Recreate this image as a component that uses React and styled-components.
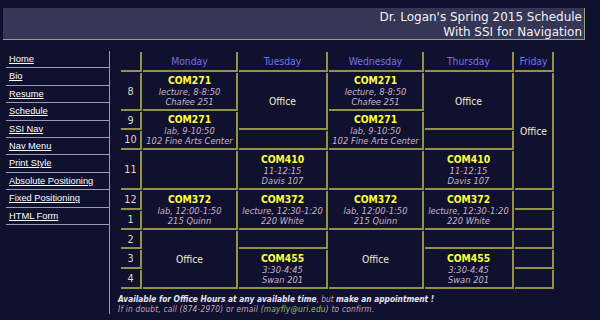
import React from "react";
import styled, { createGlobalStyle } from "styled-components";

const Global = createGlobalStyle`
  html, body { margin: 0; padding: 0; background: #10102f; }
  body { font-family: "DejaVu Sans Condensed", "DejaVu Sans", sans-serif; }
`;

const Page = styled.div`
  width: 600px;
  height: 320px;
  box-sizing: border-box;
  padding: 8px 0 0 3px;
  overflow: hidden;
`;

const Header = styled.header`
  width: 582px;
  height: 32px;
  box-sizing: border-box;
  background: #363657;
  border-right: 1px solid #96a284;
  border-bottom: 1px solid #96a284;
  padding: 2px 2px 0 0;
  text-align: right;
  color: #f2f2f2;
  font-family: "DejaVu Sans", sans-serif;
  font-size: 12px;
  line-height: 15px;
`;

const Main = styled.div`
  display: flex;
  margin-top: 11px;
`;

const Nav = styled.nav`
  width: 103px;
  margin: 0 0 0 3px;
  border-right: 1px solid #9a9ab8;
  display: flex;
  flex-direction: column;
  font-family: "Liberation Sans", Arial, sans-serif;
`;

const NavItem = styled.a`
  height: 17.4px;
  box-sizing: border-box;
  border-bottom: 1px solid #9a9ab8;
  padding: 3px 0 0 3px;
  color: #ffffff;
  font-size: 9.3px;
  line-height: 11px;
  text-decoration: underline;
  white-space: nowrap;
`;

const Content = styled.div`
  margin-left: 8px;
  display: flex;
  flex-direction: column;
`;

const Grid = styled.div`
  display: grid;
  margin: 1px 0 0 3px;
  grid-template-columns: 21px 95px 89px 95px 89px 39px;
  grid-template-rows: 20px 38px 18px 19px 39px 19px 19px 18px 19px 19px;
  gap: 1px;
`;

const Cell = styled.div`
  grid-column: ${(p) => p.$col};
  grid-row: ${(p) => p.$row} / span ${(p) => p.$span || 1};
  box-sizing: border-box;
  border-right: 2px solid #929244;
  border-bottom: 2px solid #929244;
  display: flex;
  flex-direction: column;
  align-items: center;
  justify-content: center;
  text-align: center;
  white-space: nowrap;
`;

const Day = styled(Cell)`
  color: #7474e6;
  font-size: 10.3px;
`;

const Hour = styled(Cell)`
  color: #dcdcc4;
  font-size: 10.8px;
`;

const Code = styled.div`
  color: #ffff3a;
  font-weight: bold;
  font-size: 10.3px;
  line-height: 11px;
  margin-bottom: 1px;
`;

const Detail = styled.div`
  color: #c9b4c6;
  font-style: italic;
  font-size: 9.3px;
  line-height: 10px;
`;

const Office = styled.div`
  color: #ececd4;
  font-size: 10.3px;
`;

const Footer = styled.div`
  margin-top: 5px;
  font-size: 8.3px;
  line-height: 10px;
  font-style: italic;
  color: #c3a2ba;
  white-space: nowrap;
`;

const FooterLine = styled.div`
  letter-spacing: ${(p) => p.$spacing || 0}px;
`;

const Strong = styled.span`
  font-weight: bold;
  color: #e4e4f4;
`;

const Mail = styled.span`
  color: #8fc060;
`;

const navLinks = [
  "Home",
  "Bio",
  "Resume",
  "Schedule",
  "SSI Nav",
  "Nav Menu",
  "Print Style",
  "Absolute Positioning",
  "Fixed Positioning",
  "HTML Form",
];

const days = ["Monday", "Tuesday", "Wednesday", "Thursday", "Friday"];
const hours = ["8", "9", "10", "11", "12", "1", "2", "3", "4"];

const mw = [
  { row: 2, span: 1, code: "COM271", d1: "lecture, 8-8:50", d2: "Chafee 251" },
  { row: 3, span: 2, code: "COM271", d1: "lab, 9-10:50", d2: "102 Fine Arts Center" },
  { row: 5, span: 1 },
  { row: 6, span: 2, code: "COM372", d1: "lab, 12:00-1:50", d2: "215 Quinn" },
  { row: 8, span: 3, office: true },
];
const tt = [
  { row: 2, span: 2, office: true },
  { row: 4, span: 1 },
  { row: 5, span: 1, code: "COM410", d1: "11-12:15", d2: "Davis 107" },
  { row: 6, span: 2, code: "COM372", d1: "lecture, 12:30-1:20", d2: "220 White" },
  { row: 8, span: 1 },
  { row: 9, span: 2, code: "COM455", d1: "3:30-4:45", d2: "Swan 201" },
];
const fr = [
  { row: 2, span: 4, office: true },
  { row: 6, span: 1 },
  { row: 7, span: 1 },
  { row: 8, span: 1 },
  { row: 9, span: 1 },
  { row: 10, span: 1 },
];

const columns = [
  { col: 2, items: mw },
  { col: 3, items: tt },
  { col: 4, items: mw },
  { col: 5, items: tt },
  { col: 6, items: fr },
];

export default function App() {
  return (
    <Page>
      <Global />
      <Header>
        <div>Dr. Logan's Spring 2015 Schedule</div>
        <div>With SSI for Navigation</div>
      </Header>
      <Main>
        <Nav>
          {navLinks.map((l) => (
            <NavItem key={l} href="#">
              {l}
            </NavItem>
          ))}
        </Nav>
        <Content>
          <Grid>
            <Cell $col={1} $row={1} />
            {days.map((d, i) => (
              <Day key={d} $col={i + 2} $row={1}>
                {d}
              </Day>
            ))}
            {hours.map((h, i) => (
              <Hour key={h + i} $col={1} $row={i + 2}>
                {h}
              </Hour>
            ))}
            {columns.map((c) =>
              c.items.map((it) => (
                <Cell key={`${c.col}-${it.row}`} $col={c.col} $row={it.row} $span={it.span}>
                  {it.office && <Office>Office</Office>}
                  {it.code && (
                    <>
                      <Code>{it.code}</Code>
                      <Detail>{it.d1}</Detail>
                      <Detail>{it.d2}</Detail>
                    </>
                  )}
                </Cell>
              ))
            )}
          </Grid>
          <Footer>
            <FooterLine>
              <Strong>Available for Office Hours at any available time</Strong>, but{" "}
              <Strong>make an appointment !</Strong>
            </FooterLine>
            <FooterLine $spacing={0.2}>
              If in doubt, call (874-2970) or email (<Mail>mayfly@uri.edu</Mail>) to confirm.
            </FooterLine>
          </Footer>
        </Content>
      </Main>
    </Page>
  );
}
